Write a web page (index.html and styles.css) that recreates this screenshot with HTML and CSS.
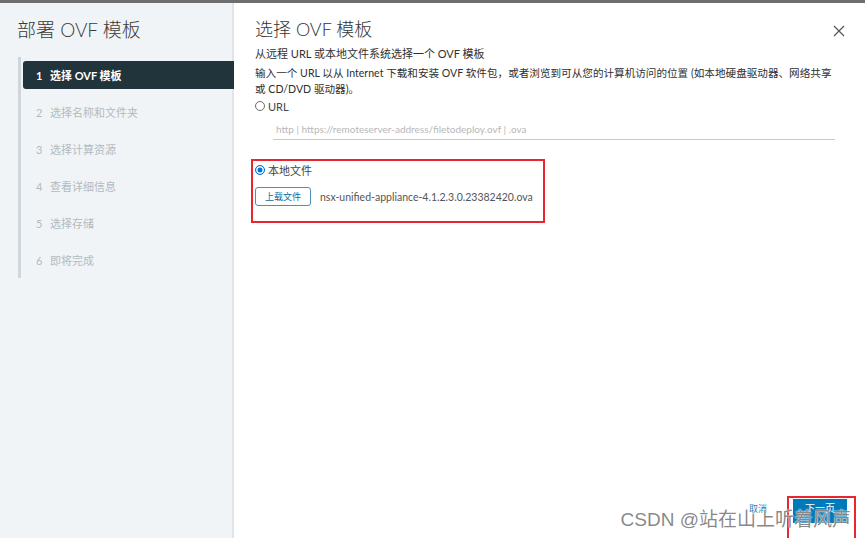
FILE: index.html
```html
<!DOCTYPE html>
<html lang="zh-CN">
<head>
    <meta charset="UTF-8">
    <title>部署 OVF 模板</title>
    <link rel="stylesheet" href="styles.css">
</head>
<body>
    <div class="topbar"></div>
    <div class="wizard">
        <!-- 左侧步骤 -->
        <div class="sidebar">
            <h1 class="wizard-title">部署 OVF 模板</h1>
            <ul class="steps">
                <li class="step active"><span class="num">1</span>选择 OVF 模板</li>
                <li class="step"><span class="num">2</span>选择名称和文件夹</li>
                <li class="step"><span class="num">3</span>选择计算资源</li>
                <li class="step"><span class="num">4</span>查看详细信息</li>
                <li class="step"><span class="num">5</span>选择存储</li>
                <li class="step"><span class="num">6</span>即将完成</li>
            </ul>
        </div>

        <div class="content">
            <div class="content-head">
                <h2 class="page-title">选择 OVF 模板</h2>
                <svg class="close" width="12" height="12" viewBox="0 0 12 12">
                    <path d="M1 1 L11 11 M11 1 L1 11" stroke="#555" stroke-width="1.2" fill="none"/>
                </svg>
            </div>
            <p class="lead">从远程 URL 或本地文件系统选择一个 OVF 模板</p>
            <p class="desc">输入一个 URL 以从 Internet 下载和安装 OVF 软件包，或者浏览到可从您的计算机访问的位置 (如本地硬盘驱动器、网络共享<br>或 CD/DVD 驱动器)。</p>

            <label class="radio-row url-row">
                <span class="radio"></span>URL
            </label>
            <div class="url-input">http | https://remoteserver-address/filetodeploy.ovf | .ova</div>

            <div class="local-file">
                <label class="radio-row">
                    <span class="radio checked"></span>本地文件
                </label>
                <div class="upload-row">
                    <button class="upload-btn">上载文件</button>
                    <span class="file-name">nsx-unified-appliance-4.1.2.3.0.23382420.ova</span>
                </div>
            </div>

            <div class="footer">
                <span class="cancel">取消</span>
                <span class="mark"><button class="next-btn">下一页</button></span>
            </div>
        </div>
    </div>

    <div class="watermark">CSDN @站在山上听着风声</div>
</body>
</html>
```

FILE: styles.css
```css
* {
    box-sizing: border-box;
}

body {
    margin: 0;
    width: 865px;
    height: 538px;
    overflow: hidden;
    font-family: Lato, 'Noto Sans CJK SC', sans-serif;
    color: #333;
    background: #fff;
    position: relative;
}

.topbar {
    height: 3px;
    background: #6e6e6e;
}

.wizard {
    display: flex;
    height: 535px;
}

/* 左侧步骤 */
.sidebar {
    width: 234px;
    background: #f0f4f7;
    border-right: 2px solid #e0e5e9;
    padding-top: 15px;
}

.wizard-title {
    margin: 0 0 0 17px;
    font-size: 19px;
    font-weight: 300;
    line-height: 24px;
    color: #3a3a3a;
}

.steps {
    list-style: none;
    margin: 15px 0 0 18px;
    padding: 4px 0;
    border-left: 3px solid #d0d7dc;
}

.step {
    height: 28px;
    margin: 0 0 9px 2px;
    padding-left: 13px;
    display: flex;
    align-items: center;
    font-size: 11px;
    color: #b3bac0;
}

.step:last-child {
    margin-bottom: 0;
}

.step .num {
    width: 14px;
}

.step.active {
    background: #21333b;
    color: #fff;
    font-weight: bold;
    border-radius: 3px 0 0 3px;
    margin-right: -2px;
}

.content {
    flex: 1;
    display: flex;
    flex-direction: column;
    padding: 13px 18px 15px 21px;
}

.content-head {
    display: flex;
    justify-content: space-between;
    align-items: center;
}

.page-title {
    margin: 0;
    font-size: 18px;
    font-weight: 300;
    line-height: 26px;
    color: #333;
}

.close {
    margin-right: 2px;
    margin-top: 3px;
}

.lead,
.desc {
    margin: 0;
    font-size: 11px;
    line-height: 16px;
    color: #2f2f2f;
}

.lead {
    margin-top: 4px;
}

.desc {
    margin-top: 3px;
    font-size: 10.6px;
    white-space: nowrap;
}

.radio-row {
    display: flex;
    align-items: center;
    height: 16px;
    font-size: 11px;
    color: #444;
}

.url-row {
    margin-top: 1px;
}

.radio {
    width: 10px;
    height: 10px;
    border: 1px solid #6c6c6c;
    border-radius: 50%;
    margin-right: 3px;
    background: #fff;
}

.radio.checked {
    border: 1px solid #0075d9;
    box-shadow: inset 0 0 0 1.5px #fff;
    background: #0075d9;
}

.url-input {
    margin: 7px 12px 0 18px;
    padding: 2px 0 4px 3px;
    font-size: 10px;
    color: #b8b8b8;
    border-bottom: 1px solid #c8c8c8;
}

/* 标注的本地文件区域 */
.local-file {
    width: 294px;
    height: 64px;
    margin: 19px 0 0 -4px;
    border: 2px solid #e8262f;
    padding: 1px 0 0 2px;
}

.local-file .radio-row {
    height: 15px;
}

.upload-row {
    display: flex;
    align-items: center;
    margin-top: 10px;
}

.upload-btn {
    height: 19px;
    width: 56px;
    padding: 0;
    font-family: inherit;
    font-size: 9px;
    color: #0a6aa1;
    background: #fff;
    border: 1px solid #4d8fb5;
    border-radius: 3px;
}

.file-name {
    margin-left: 9px;
    font-size: 10.5px;
    color: #555;
}

.footer {
    margin-top: auto;
    display: flex;
    justify-content: flex-end;
    align-items: center;
}

.cancel {
    font-size: 9px;
    color: #2a7fb3;
    margin-right: 26px;
    margin-top: -6px;
}

.mark {
    position: relative;
}

.mark::after {
    content: "";
    position: absolute;
    top: -3px;
    left: -6px;
    right: -9px;
    bottom: -22px;
    border: 2px solid #e8262f;
}

.next-btn {
    display: block;
    width: 54px;
    height: 24px;
    padding: 0 0 8px;
    font-family: inherit;
    font-size: 10px;
    color: #fff;
    background: #0079b8;
    border: none;
}

.watermark {
    position: absolute;
    right: 14px;
    bottom: 7px;
    font-family: 'Liberation Sans', 'Noto Sans CJK SC', sans-serif;
    font-size: 19px;
    color: rgba(115, 115, 115, 0.85);
    text-shadow: 0 0 2px #fff, 0 0 1px #fff;
}
```
